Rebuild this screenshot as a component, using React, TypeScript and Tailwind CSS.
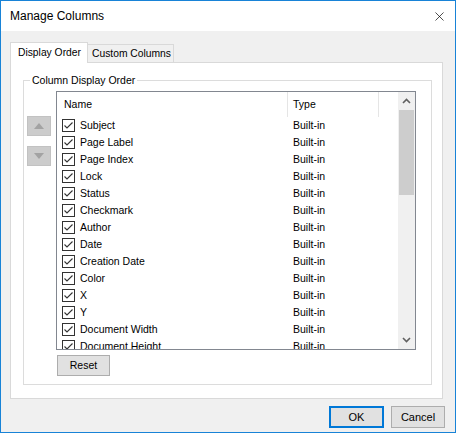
import { X } from "lucide-react";

const columns = [
  "Subject",
  "Page Label",
  "Page Index",
  "Lock",
  "Status",
  "Checkmark",
  "Author",
  "Date",
  "Creation Date",
  "Color",
  "X",
  "Y",
  "Document Width",
  "Document Height",
];

const font = { fontFamily: '"Liberation Sans", Arial, sans-serif' };

const CheckBox = () => (
  <span className="w-[13px] h-[13px] border border-[#333333] bg-white flex items-center justify-center shrink-0">
    <svg width="11" height="11" viewBox="0 0 11 11">
      <polyline points="1.5,5.5 4,8 9.5,2.5" fill="none" stroke="#333333" strokeWidth="1.1" />
    </svg>
  </span>
);

const MoveButton = ({ down }: { down?: boolean }) => (
  <div className="w-[24px] h-[20px] bg-[#cccccc] border border-[#c2c2c2] flex items-center justify-center">
    <svg width="10" height="6" viewBox="0 0 10 6">
      <polygon points={down ? "0,0 10,0 5,6" : "5,0 10,6 0,6"} fill="#a3a3a3" />
    </svg>
  </div>
);

const Chevron = ({ down }: { down?: boolean }) => (
  <svg width="9" height="6" viewBox="0 0 9 6">
    <polyline
      points={down ? "1,1 4.5,4.5 8,1" : "1,5 4.5,1.5 8,5"}
      fill="none"
      stroke="#606060"
      strokeWidth="1.6"
    />
  </svg>
);

const App = () => {
  return (
    <div
      className="w-[456px] h-[433px] border border-[#1883d7] bg-[#f0f0f0] flex flex-col text-black"
      style={font}
    >
      {/* title bar */}
      <div className="h-[30px] bg-white flex items-center justify-between pl-[9px] pr-[8px] shrink-0">
        <span className="text-[12px]">Manage Columns</span>
        <X className="w-[15px] h-[15px]" strokeWidth={1.1} />
      </div>

      <div className="flex flex-col pl-[9px] pt-[10px]">
        {/* tabs */}
        <div className="flex items-end h-[21px] text-[10.3px]">
          <div className="relative z-10 w-[78px] h-[21px] bg-white border border-[#d9d9d9] border-b-0 flex items-center pl-[7px] -mb-px">
            Display Order
          </div>
          <div className="w-[86px] h-[18px] bg-[#f0f0f0] border border-[#d9d9d9] border-l-0 border-b-0 flex items-center pl-[4px]">
            Custom Columns
          </div>
        </div>

        {/* tab panel */}
        <div className="w-[433px] h-[337px] bg-white border border-[#d9d9d9] text-[10.5px]">
          <div className="relative ml-[12px] mt-[17px] w-[409px] h-[305px] border border-[#dcdcdc]">
            <span className="absolute -top-[7px] left-[6px] bg-white px-[2px] leading-[13px]">
              Column Display Order
            </span>

            <div className="flex pl-[3px] pt-[10px] gap-[5px]">
              <div className="flex flex-col gap-[10px] mt-[25px]">
                <MoveButton />
                <MoveButton down />
              </div>

              <div className="flex flex-col">
                {/* list view */}
                <div className="w-[360px] h-[259px] border border-[#828790] bg-white flex overflow-hidden">
                  <div className="flex-1 flex flex-col">
                    <div className="h-[25px] flex shrink-0">
                      <div className="w-[231px] border-r border-[#e5e5e5] flex items-center pl-[7px]">Name</div>
                      <div className="w-[91px] border-r border-[#e5e5e5] flex items-center pl-[5px]">Type</div>
                    </div>
                    {columns.map((c) => (
                      <div key={c} className="h-[17px] flex shrink-0 items-center">
                        <div className="w-[231px] flex items-center gap-[5px] pl-[5px]">
                          <CheckBox />
                          <span>{c}</span>
                        </div>
                        <div className="pl-[5px]">Built-in</div>
                      </div>
                    ))}
                  </div>

                  {/* scrollbar */}
                  <div className="w-[17px] bg-[#f0f0f0] flex flex-col shrink-0">
                    <div className="h-[18px] flex items-center justify-center">
                      <Chevron />
                    </div>
                    <div className="h-[85px] mx-px bg-[#cdcdcd]" />
                    <div className="flex-1" />
                    <div className="h-[18px] flex items-center justify-center">
                      <Chevron down />
                    </div>
                  </div>
                </div>

                <button className="ml-px mt-[5px] w-[53px] h-[21px] bg-[#e1e1e1] border border-[#adadad] flex items-center justify-center">
                  Reset
                </button>
              </div>
            </div>
          </div>
        </div>

        {/* dialog buttons */}
        <div className="flex justify-end gap-[7px] mt-[7px] pr-[10px] text-[11px]">
          <button className="w-[55px] h-[22px] bg-[#e1e1e1] border-2 border-[#0078d7] flex items-center justify-center">
            OK
          </button>
          <button className="w-[54px] h-[22px] bg-[#e1e1e1] border border-[#adadad] flex items-center justify-center">
            Cancel
          </button>
        </div>
      </div>
    </div>
  );
};

export default App;
